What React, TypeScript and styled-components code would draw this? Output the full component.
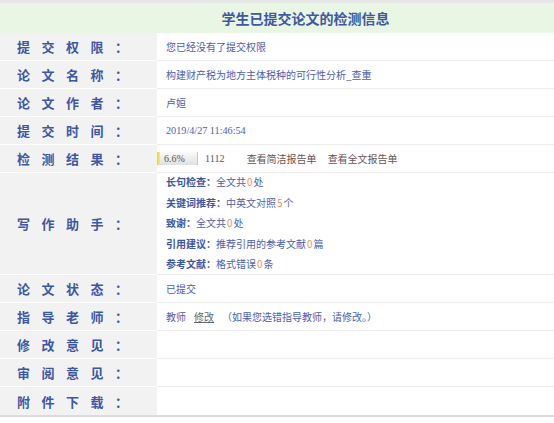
import React from 'react'
import styled, { createGlobalStyle } from 'styled-components'

const GlobalStyle = createGlobalStyle`
  html, body {
    margin: 0;
    padding: 0;
    background: #fff;
    overflow: hidden;
  }
  body {
    font-family: "Noto Sans CJK SC", "Noto Sans", sans-serif;
  }
`

const Table = styled.div`
  width: 100%;
  border-top: 3px solid #e6e6e6;
  border-bottom: 2px solid #dcdcdc;
`

const Header = styled.div`
  height: 30px;
  background: #e8f6e3;
  color: #3d58a4;
  font-size: 14px;
  font-weight: 700;
  display: flex;
  align-items: center;
  justify-content: center;
  padding-left: 57px;
`

const Row = styled.div<{ $height?: number }>`
  display: grid;
  grid-template-columns: 157px 1fr;
  height: ${({ $height }) => $height || 28}px;
  &:last-child > div {
    border-bottom: 0;
  }
`

const Label = styled.div`
  background: #f2f2f2;
  border-bottom: 1px solid #fff;
  color: #3c57a5;
  font-size: 13px;
  font-weight: 700;
  letter-spacing: 11.5px;
  padding-left: 17px;
  display: flex;
  align-items: center;
  white-space: nowrap;
`

const Value = styled.div<{ $flush?: boolean }>`
  border-bottom: 1px solid #ececec;
  color: #4b60b0;
  font-size: 10px;
  padding-left: ${({ $flush }) => ($flush ? 0 : 9)}px;
  display: flex;
  align-items: center;
  white-space: nowrap;
  overflow: hidden;
`

const Serif = styled.span<{ $color?: string }>`
  font-family: "Liberation Serif", serif;
  font-size: 10.2px;
  color: ${({ $color }) => $color || 'inherit'};
`

const Bar = styled.div`
  width: 41px;
  height: 13px;
  box-sizing: border-box;
  border-right: 1px solid #c8c8c8;
  background: linear-gradient(#fafafa, #e0e0e0);
  position: relative;
  display: flex;
  align-items: center;
  padding-left: 7px;
  margin-right: 7px;
`

const BarFill = styled.div`
  position: absolute;
  left: 0;
  top: 0;
  bottom: 0;
  background: linear-gradient(90deg, #e8dc10, #f4ec70);
`

const BarText = styled.span`
  position: relative;
  font-family: "Liberation Serif", serif;
  font-size: 10px;
  color: #555;
`

const ReportLink = styled.span`
  color: #6a5252;
  margin-left: 22px;
  & + & {
    margin-left: 11px;
  }
`

const HelperList = styled.div`
  display: flex;
  flex-direction: column;
  justify-content: center;
  line-height: 20.4px;
`

const Key = styled.b`
  font-weight: 700;
  color: #3c57a5;
`

const Num = styled.span`
  color: #f2924a;
  margin: 0 1px;
`

const EditLink = styled.span`
  color: #666;
  text-decoration: underline;
  margin: 0 8px 0 8px;
`

const helpers: [string, string, string, string][] = [
  ['长句检查：', '全文共', '0', '处'],
  ['关键词推荐：', '中英文对照', '5', '个'],
  ['致谢：', '全文共', '0', '处'],
  ['引用建议：', '推荐引用的参考文献', '0', '篇'],
  ['参考文献：', '格式错误', '0', '条'],
]

const App: React.FunctionComponent = () => {
  const percent = 6.6
  return (
    <>
      <GlobalStyle />
      <Table>
        <Header>学生已提交论文的检测信息</Header>
        <Row>
          <Label>提交权限：</Label>
          <Value>您已经没有了提交权限</Value>
        </Row>
        <Row>
          <Label>论文名称：</Label>
          <Value>构建财产税为地方主体税种的可行性分析_查重</Value>
        </Row>
        <Row>
          <Label>论文作者：</Label>
          <Value>卢姮</Value>
        </Row>
        <Row>
          <Label>提交时间：</Label>
          <Value>
            <Serif>2019/4/27 11:46:54</Serif>
          </Value>
        </Row>
        <Row>
          <Label>检测结果：</Label>
          <Value $flush>
            <Bar>
              <BarFill style={{ width: `${Math.max(percent * 0.5, 3)}px` }} />
              <BarText>{percent}%</BarText>
            </Bar>
            <Serif $color="#6a5050">1112</Serif>
            <ReportLink>查看简洁报告单</ReportLink>
            <ReportLink>查看全文报告单</ReportLink>
          </Value>
        </Row>
        <Row $height={102}>
          <Label>写作助手：</Label>
          <Value>
            <HelperList>
              {helpers.map(([key, text, num, unit]) => (
                <div key={key}>
                  <Key>{key}</Key>
                  {text}
                  <Num>{num}</Num>
                  {unit}
                </div>
              ))}
            </HelperList>
          </Value>
        </Row>
        <Row>
          <Label>论文状态：</Label>
          <Value>已提交</Value>
        </Row>
        <Row>
          <Label>指导老师：</Label>
          <Value>
            教师
            <EditLink>修改</EditLink>
            （如果您选错指导教师，请修改。）
          </Value>
        </Row>
        <Row>
          <Label>修改意见：</Label>
          <Value />
        </Row>
        <Row>
          <Label>审阅意见：</Label>
          <Value />
        </Row>
        <Row>
          <Label>附件下载：</Label>
          <Value />
        </Row>
      </Table>
    </>
  )
}

export default App
